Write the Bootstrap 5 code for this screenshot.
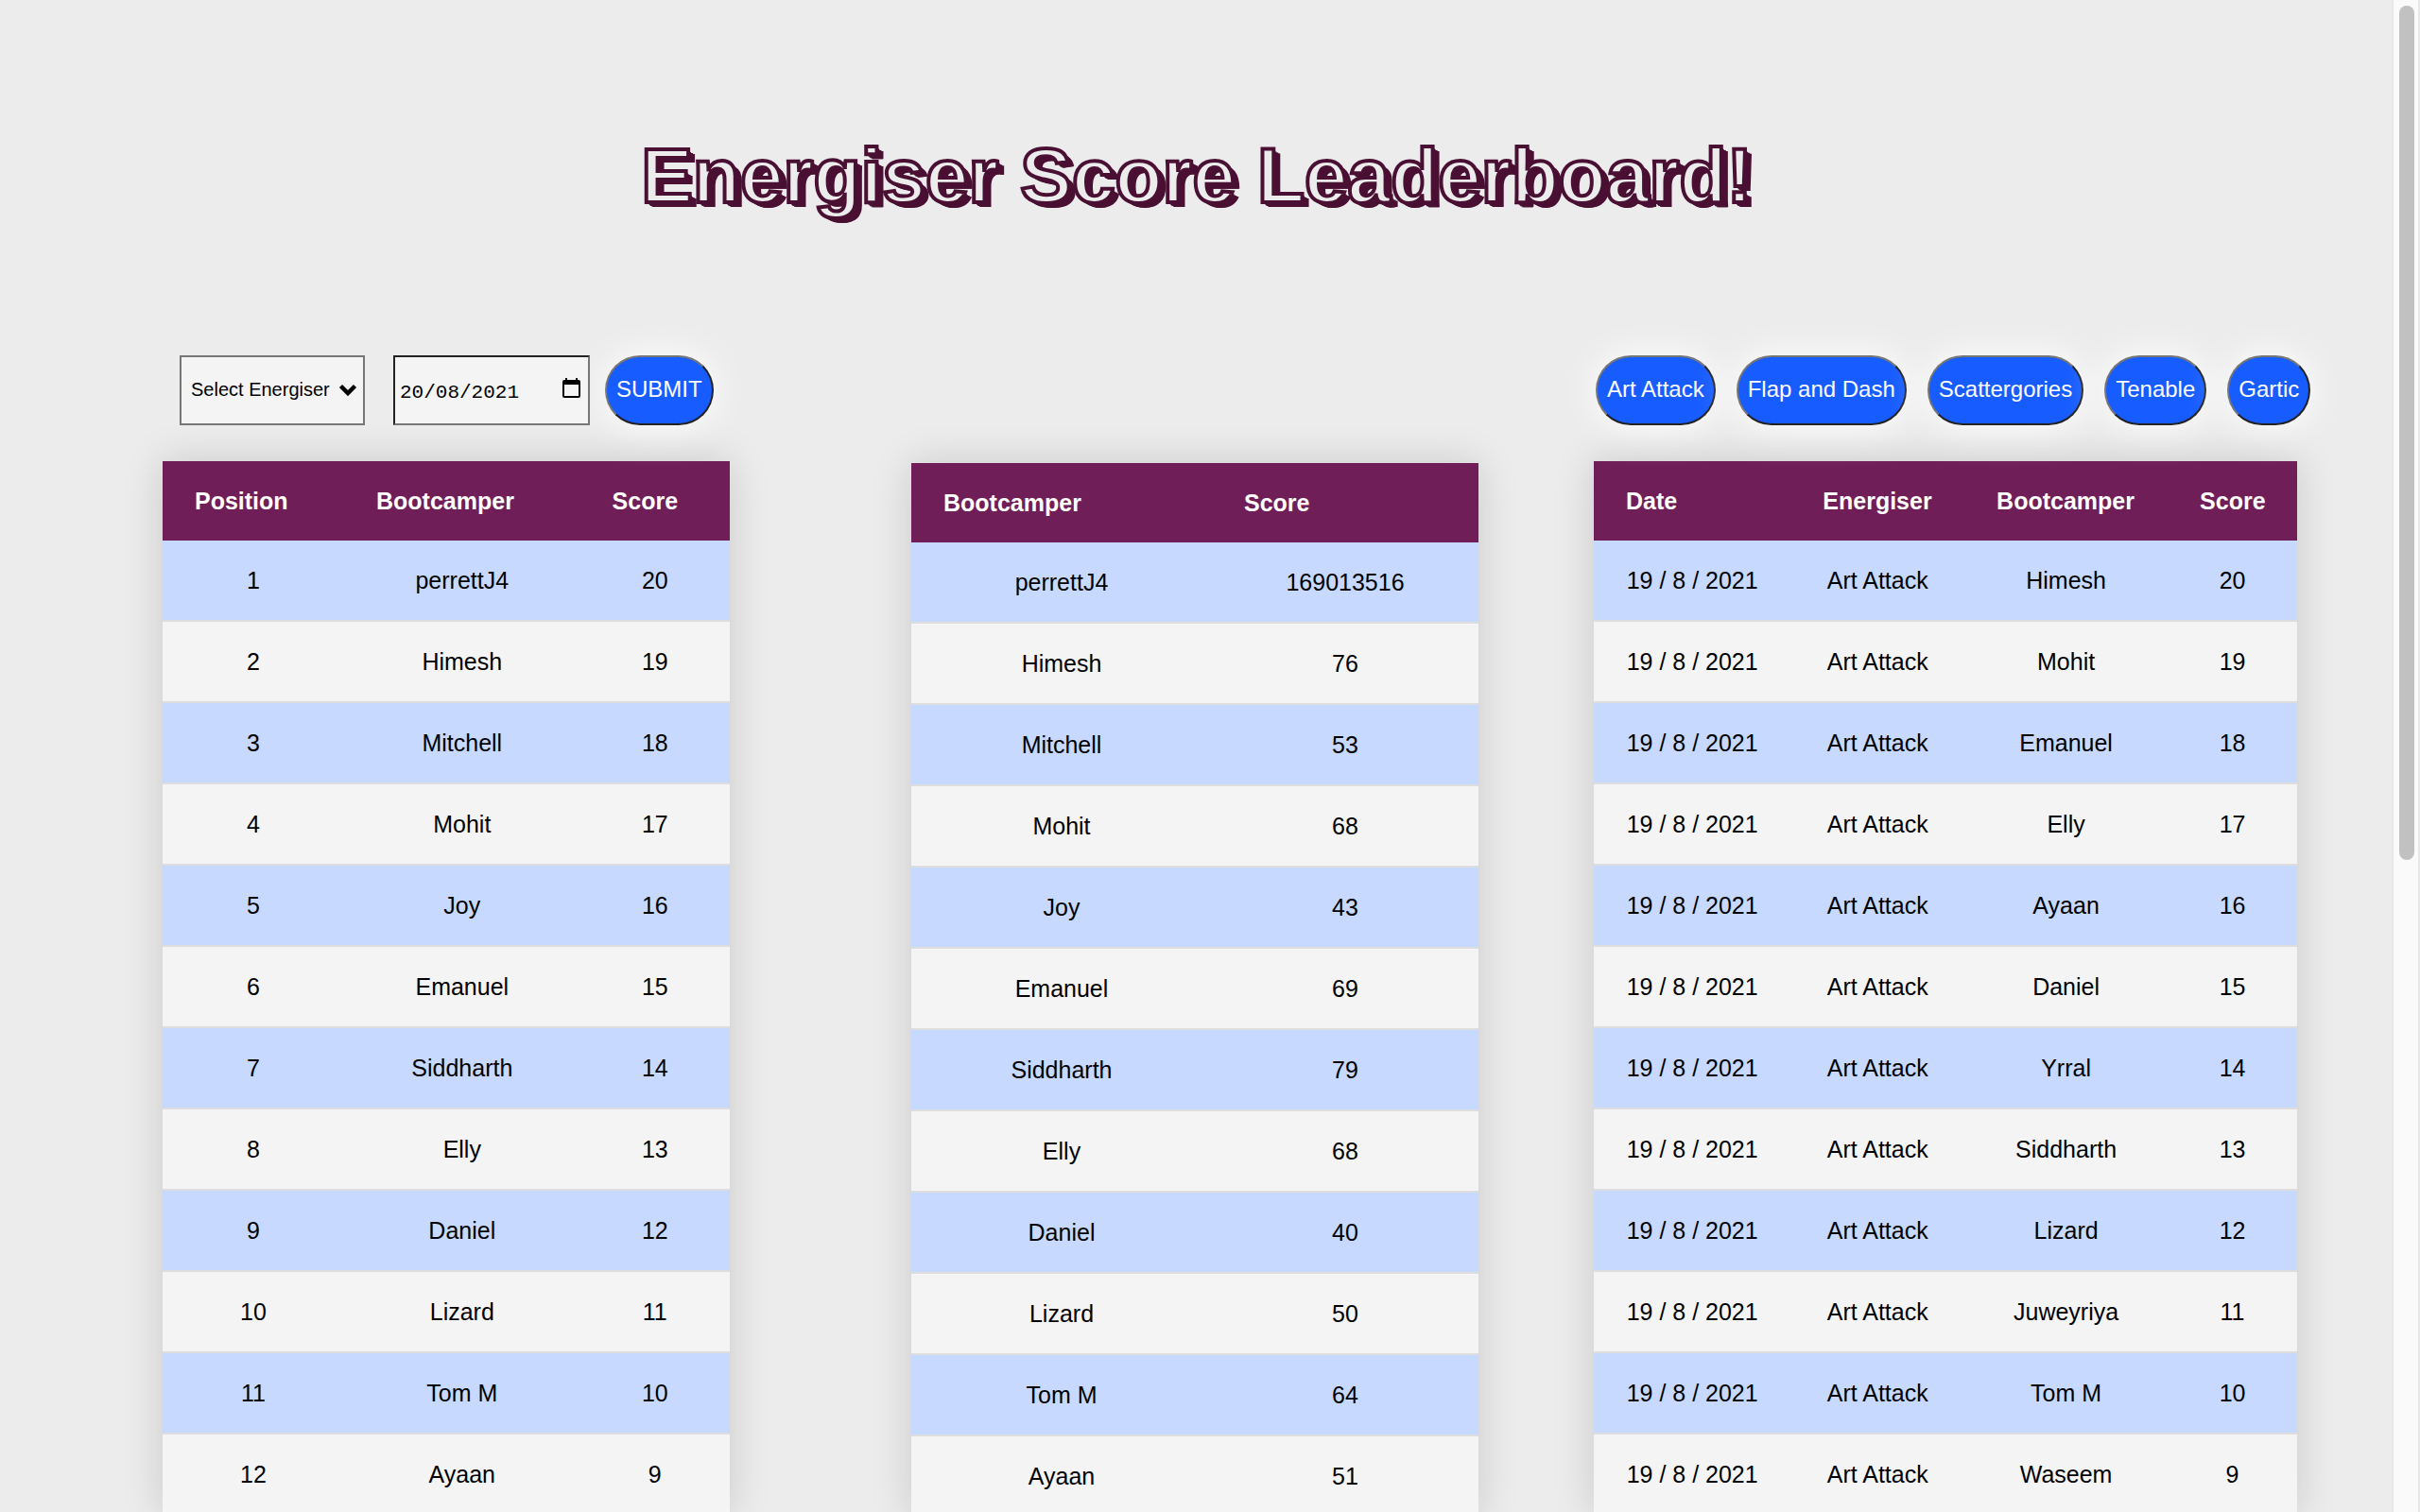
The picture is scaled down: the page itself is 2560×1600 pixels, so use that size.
<!DOCTYPE html>
<html lang="en-GB">
<head>
<meta charset="utf-8">
<meta name="viewport" content="width=device-width, initial-scale=1">
<title>Energiser Score Leaderboard!</title>
<link href="https://cdn.jsdelivr.net/npm/bootstrap@5.3.0/dist/css/bootstrap.min.css" rel="stylesheet">
<style>
  body { height: 100vh; overflow: hidden; padding-right: 28px; background: #ececec; color: #000; font-family: "Liberation Sans", Arial, sans-serif; font-size: 25px; }
  .page-title { padding: 142px 0 146px; }
  .page-title h1 {
    font-size: 82px; line-height: 88px; font-weight: 700; color: #ececec;
    -webkit-text-stroke: 4px #4a1033;
    text-shadow: 1px 1px #4a1033, 2px 2px #4a1033, 3px 3px #4a1033, 4px 4px #4a1033, 5px 4px #4a1033, 6px 5px #4a1033, 7px 5px #4a1033;
  }
  .boards { padding: 0 102px 0 172px; }
  .board { flex: 600 1 0; min-width: 0; }
  .board-total { margin: 114px 122px 0 192px; }
  .board-history { flex-grow: 744; }
  .controls { height: 74px; margin-bottom: 38px; }
  .filter-form { padding-left: 18px; gap: 16px; }
  .pick-energiser {
    width: 196px; height: 74px; margin-right: 14px; padding: 0 10px 2px; border: 2px solid #767676; border-radius: 0;
    font-size: 20px; color: #000; background-color: #f4f4f4;
    background-image: url("data:image/svg+xml,%3Csvg xmlns='http://www.w3.org/2000/svg' viewBox='0 0 20 14'%3E%3Cpath d='M2.5 2.5 10 10l7.5-7.5' fill='none' stroke='%23000' stroke-width='4.5'/%3E%3C/svg%3E");
    background-size: 20px 14px; background-position: right 6px center;
  }
  .date-box { width: 208px; height: 74px; }
  .date-box input {
    height: 74px; padding: 4px 5px 0; border: 2px solid; border-color: #222 #767676 #767676 #222; border-radius: 0;
    background: #f4f4f4; color: #000; font-family: "Liberation Mono", monospace; font-size: 21px;
  }
  .date-box svg { position: absolute; right: 10px; top: 24px; width: 19px; height: 21px; pointer-events: none; }
  .pill {
    --bs-btn-color: #fff; --bs-btn-bg: #175cff; --bs-btn-hover-color: #fff; --bs-btn-hover-bg: #0f4be0;
    height: 74px; padding: 0 10px 2px; border: 2px solid; border-color: #767676 #222 #222 #767676; border-radius: 37px;
    font-size: 24px; line-height: 28px; white-space: nowrap; box-shadow: 0 0 40px #fff;
  }
  .quiz-buttons { padding-left: 2px; gap: 22px; }
  .score-table {
    --bs-table-bg: #f4f4f4; --bs-table-color: #000; table-layout: fixed; border-collapse: separate; border-spacing: 0;
    margin: 0; line-height: 30px; color: #000; box-shadow: 0 0 40px rgba(0, 0, 0, .15);
  }
  .score-table > thead > tr > th { height: 84px; padding: 0 32px 0 34px; border: 0; background: #701e57; color: #fff; text-align: left; vertical-align: middle; white-space: nowrap; }
  .score-table > tbody > tr > td { height: 86px; padding: 0; border: 0; border-bottom: 2px solid #ddd; text-align: center; vertical-align: middle; white-space: nowrap; }
  .score-table > tbody > tr:nth-child(odd) > td { background: #c7d9ff; }
  .page-scroll { position: fixed; top: 0; right: 0; width: 30px; height: 100vh; padding: 6px 4px 0 6px; border: solid #e7e7e7; border-width: 0 2px; background: #fafafa; }
  .page-scroll div { width: 16px; height: 57vh; min-height: 40px; max-height: 904px; border-radius: 8px; background: #c1c1c1; }
</style>
</head>
<body>
<header class="page-title text-center"><h1 class="m-0">Energiser Score Leaderboard!</h1></header>
<main class="boards d-flex align-items-start">
  <section class="board">
    <form class="controls filter-form d-flex" onsubmit="return false">
      <select id="energiser" aria-label="Energiser" class="form-select pick-energiser flex-shrink-0"><option>Select Energiser</option><option>Art Attack</option><option>Flap and Dash</option><option>Scattergories</option><option>Tenable</option><option>Gartic</option></select>
      <div class="date-box position-relative flex-shrink-0">
        <input id="day" aria-label="Date" class="form-control" type="text" value="20/08/2021">
        <svg viewBox="0 0 19 21" aria-hidden="true"><path d="M3 0h2v2h9V0h2v2h1a2 2 0 0 1 2 2v15a2 2 0 0 1-2 2H2a2 2 0 0 1-2-2V4a2 2 0 0 1 2-2h1zM2 7v12h15V7z" fill="#000" fill-rule="evenodd"/></svg>
      </div>
      <button class="btn pill" type="submit">SUBMIT</button>
    </form>
    <table class="table score-table">
      <colgroup><col style="width:32%"><col style="width:41.6%"><col></colgroup>
      <thead><tr><th>Position</th><th>Bootcamper</th><th>Score</th></tr></thead>
      <tbody>
        <tr><td>1</td><td>perrettJ4</td><td>20</td></tr>
        <tr><td>2</td><td>Himesh</td><td>19</td></tr>
        <tr><td>3</td><td>Mitchell</td><td>18</td></tr>
        <tr><td>4</td><td>Mohit</td><td>17</td></tr>
        <tr><td>5</td><td>Joy</td><td>16</td></tr>
        <tr><td>6</td><td>Emanuel</td><td>15</td></tr>
        <tr><td>7</td><td>Siddharth</td><td>14</td></tr>
        <tr><td>8</td><td>Elly</td><td>13</td></tr>
        <tr><td>9</td><td>Daniel</td><td>12</td></tr>
        <tr><td>10</td><td>Lizard</td><td>11</td></tr>
        <tr><td>11</td><td>Tom M</td><td>10</td></tr>
        <tr><td>12</td><td>Ayaan</td><td>9</td></tr>
      </tbody>
    </table>
  </section>
  <section class="board board-total">
    <table class="table score-table">
      <colgroup><col style="width:53%"><col></colgroup>
      <thead><tr><th>Bootcamper</th><th>Score</th></tr></thead>
      <tbody>
        <tr><td>perrettJ4</td><td>169013516</td></tr>
        <tr><td>Himesh</td><td>76</td></tr>
        <tr><td>Mitchell</td><td>53</td></tr>
        <tr><td>Mohit</td><td>68</td></tr>
        <tr><td>Joy</td><td>43</td></tr>
        <tr><td>Emanuel</td><td>69</td></tr>
        <tr><td>Siddharth</td><td>79</td></tr>
        <tr><td>Elly</td><td>68</td></tr>
        <tr><td>Daniel</td><td>40</td></tr>
        <tr><td>Lizard</td><td>50</td></tr>
        <tr><td>Tom M</td><td>64</td></tr>
        <tr><td>Ayaan</td><td>51</td></tr>
      </tbody>
    </table>
  </section>
  <section class="board board-history">
    <div class="controls quiz-buttons d-flex">
      <button class="btn pill" type="button">Art Attack</button>
      <button class="btn pill" type="button">Flap and Dash</button>
      <button class="btn pill" type="button">Scattergories</button>
      <button class="btn pill" type="button">Tenable</button>
      <button class="btn pill" type="button">Gartic</button>
    </div>
    <table class="table score-table">
      <colgroup><col style="width:28%"><col style="width:24.7%"><col style="width:28.9%"><col></colgroup>
      <thead><tr><th>Date</th><th>Energiser</th><th>Bootcamper</th><th>Score</th></tr></thead>
      <tbody>
        <tr><td>19 / 8 / 2021</td><td>Art Attack</td><td>Himesh</td><td>20</td></tr>
        <tr><td>19 / 8 / 2021</td><td>Art Attack</td><td>Mohit</td><td>19</td></tr>
        <tr><td>19 / 8 / 2021</td><td>Art Attack</td><td>Emanuel</td><td>18</td></tr>
        <tr><td>19 / 8 / 2021</td><td>Art Attack</td><td>Elly</td><td>17</td></tr>
        <tr><td>19 / 8 / 2021</td><td>Art Attack</td><td>Ayaan</td><td>16</td></tr>
        <tr><td>19 / 8 / 2021</td><td>Art Attack</td><td>Daniel</td><td>15</td></tr>
        <tr><td>19 / 8 / 2021</td><td>Art Attack</td><td>Yrral</td><td>14</td></tr>
        <tr><td>19 / 8 / 2021</td><td>Art Attack</td><td>Siddharth</td><td>13</td></tr>
        <tr><td>19 / 8 / 2021</td><td>Art Attack</td><td>Lizard</td><td>12</td></tr>
        <tr><td>19 / 8 / 2021</td><td>Art Attack</td><td>Juweyriya</td><td>11</td></tr>
        <tr><td>19 / 8 / 2021</td><td>Art Attack</td><td>Tom M</td><td>10</td></tr>
        <tr><td>19 / 8 / 2021</td><td>Art Attack</td><td>Waseem</td><td>9</td></tr>
      </tbody>
    </table>
  </section>
</main>
<div class="page-scroll" aria-hidden="true"><div></div></div>
<script src="https://cdn.jsdelivr.net/npm/bootstrap@5.3.0/dist/js/bootstrap.bundle.min.js"></script>
</body>
</html>
